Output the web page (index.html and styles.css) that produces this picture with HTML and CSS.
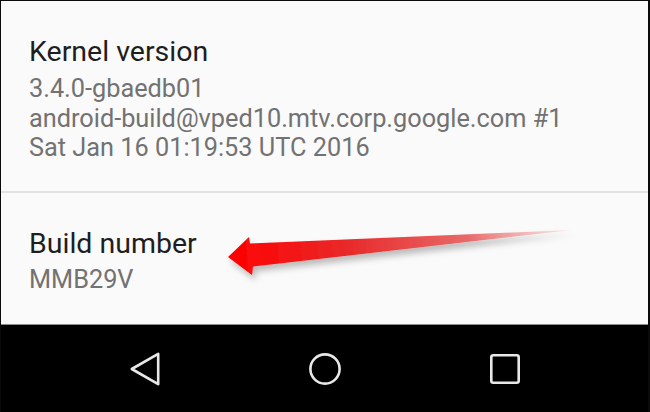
FILE: index.html
```html
<!DOCTYPE html>
<html>
<head>
<meta charset="utf-8">
<link rel="stylesheet" href="styles.css">
</head>
<body>
<div class="frame">
  <div class="list">
    <div class="item item-kernel">
      <div class="title">Kernel version</div>
      <div class="summary">3.4.0-gbaedb01<br>android-build@vped10.mtv.corp.google.com #1<br>Sat Jan 16 01:19:53 UTC 2016</div>
    </div>
    <div class="divider"></div>
    <div class="item item-build">
      <div class="title">Build number</div>
      <div class="summary">MMB29V</div>
    </div>
    <svg class="arrow" width="650" height="412" viewBox="0 0 650 412">
      <defs>
        <linearGradient id="ag" x1="228" y1="257" x2="572" y2="230" gradientUnits="userSpaceOnUse">
          <stop offset="0" stop-color="#ff0000"/>
          <stop offset="0.35" stop-color="#e82a2a"/>
          <stop offset="0.7" stop-color="#e86a6a"/>
          <stop offset="1" stop-color="#f7d6d6" stop-opacity="0.6"/>
        </linearGradient>
        <filter id="sh" x="-10%" y="-50%" width="120%" height="200%">
          <feDropShadow dx="3" dy="5" stdDeviation="3" flood-color="#000" flood-opacity="0.25"/>
        </filter>
      </defs>
      <polygon points="228,257 249,237 250,243.5 572,230 253,266.5 252,275" fill="url(#ag)" filter="url(#sh)"/>
    </svg>
  </div>
  <div class="navbar">
    <svg class="nav-icon" width="40" height="40" viewBox="0 0 40 40">
      <path d="M33.2 4.8 L33.2 35.2 L6.8 20 Z" fill="none" stroke="#e8e8e8" stroke-width="2.6" stroke-linejoin="round"/>
    </svg>
    <svg class="nav-icon" width="40" height="40" viewBox="0 0 40 40">
      <circle cx="20" cy="20" r="14.6" fill="none" stroke="#e8e8e8" stroke-width="2.6"/>
    </svg>
    <svg class="nav-icon" width="40" height="40" viewBox="0 0 40 40">
      <rect x="6.3" y="6.3" width="27.4" height="27.4" rx="2" fill="none" stroke="#e8e8e8" stroke-width="2.6"/>
    </svg>
  </div>
</div>
</body>
</html>
```

FILE: styles.css
```css
html, body {
  margin: 0;
  padding: 0;
  background: #000;
}
body {
  width: 650px;
  height: 412px;
  overflow: hidden;
  font-family: Roboto, "Noto Sans", "Liberation Sans", sans-serif;
}
.frame {
  width: 650px;
  height: 412px;
  box-sizing: border-box;
  border-top: 1px solid #0a0a0a;
  border-left: 1px solid #0a0a0a;
  border-right: 2px solid #0a0a0a;
  display: flex;
  flex-direction: column;
  background: #000;
}
.list {
  position: relative;
  height: 323px;
  background: #fafafa;
  border-bottom: 1px solid #8a8a8a;
  display: flex;
  flex-direction: column;
}
.item {
  padding-left: 28px;
  box-sizing: border-box;
}
.item-kernel {
  padding-top: 34px;
  height: 190px;
}
.item-build {
  padding-top: 34px;
}
.title {
  font-size: 28.5px;
  line-height: 34px;
  color: #1e1e1e;
}
.summary {
  font-size: 25.3px;
  line-height: 29.5px;
  color: #727272;
  margin-top: 5px;
}
.item-build .summary {
  margin-top: 4px;
}
.divider {
  height: 2px;
  background: #e2e2e2;
}
.arrow {
  position: absolute;
  left: -1px;
  top: -1px;
  pointer-events: none;
}
.navbar {
  flex: 1;
  background: #000;
  display: flex;
  align-items: center;
  justify-content: center;
  gap: 140px;
  padding-left: 1px;
}
.nav-icon {
  display: block;
}
```
